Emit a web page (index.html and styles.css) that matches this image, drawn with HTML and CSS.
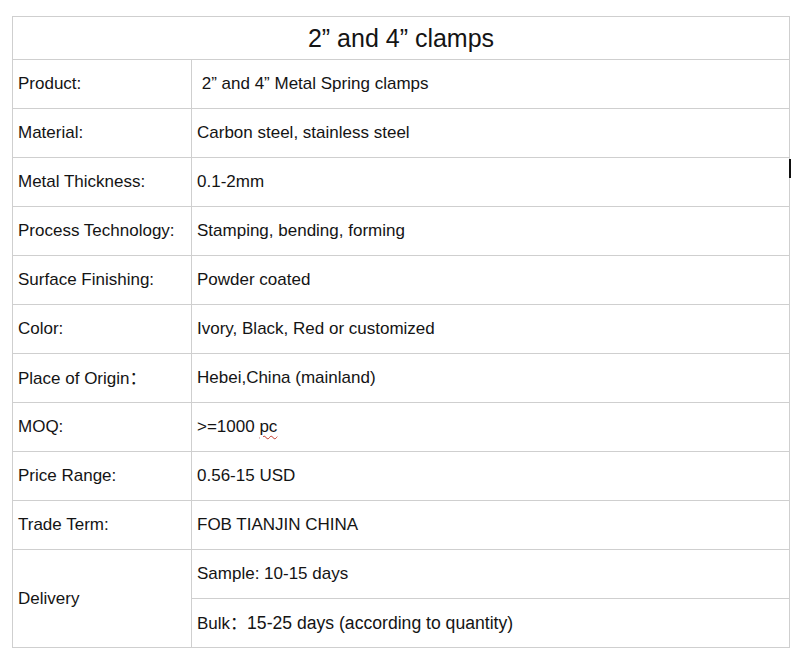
FILE: index.html
```html
<!DOCTYPE html>
<html lang="en">
<head>
<meta charset="utf-8">
<title>2” and 4” clamps</title>
<link rel="stylesheet" href="styles.css">
</head>
<body>
<div class="page">
  <table class="spec">
    <colgroup>
      <col class="col-label">
      <col class="col-value">
    </colgroup>
    <tr><td class="title" colspan="2">2” and 4” clamps</td></tr>
    <tr><td class="label">Product:</td><td class="value">&nbsp;2” and 4” Metal Spring clamps</td></tr>
    <tr><td class="label">Material:</td><td class="value">Carbon steel, stainless steel</td></tr>
    <tr><td class="label">Metal Thickness:</td><td class="value">0.1-2mm</td></tr>
    <tr><td class="label">Process Technology:</td><td class="value">Stamping, bending, forming</td></tr>
    <tr><td class="label">Surface Finishing:</td><td class="value">Powder coated</td></tr>
    <tr><td class="label">Color:</td><td class="value">Ivory, Black, Red or customized</td></tr>
    <tr><td class="label">Place of Origin<span class="cjk">：</span></td><td class="value">Hebei,China (mainland)</td></tr>
    <tr><td class="label">MOQ:</td><td class="value">&gt;=1000 <span class="spell">pc</span></td></tr>
    <tr><td class="label">Price Range:</td><td class="value">0.56-15 USD</td></tr>
    <tr><td class="label">Trade Term:</td><td class="value">FOB TIANJIN CHINA</td></tr>
    <tr><td class="label" rowspan="2">Delivery</td><td class="value">Sample: 10-15 days</td></tr>
    <tr><td class="value">Bulk<span class="cjk">：</span><span class="wide">15-25 days (according to quantity)</span></td></tr>
  </table>
  <span class="caret"></span>
</div>
</body>
</html>
```
FILE: styles.css
```css
html, body {
  margin: 0;
  padding: 0;
  background: #ffffff;
}

.page {
  position: relative;
  padding: 16px 12px 0 12px;
  font-family: "Liberation Sans", Arial, "Noto Sans CJK SC", sans-serif;
  color: #141414;
}

.spec {
  width: 777px;
  border-collapse: collapse;
  table-layout: fixed;
}

.col-label {
  width: 179px;
}

.col-value {
  width: 598px;
}

.spec td {
  border: 1px solid #cfcfcf;
  height: 48px;
  padding: 0 0 0 5px;
  font-size: 17px;
  line-height: 20px;
  vertical-align: middle;
  white-space: nowrap;
  overflow: hidden;
}

.spec td.title {
  height: 42px;
  text-align: center;
  font-size: 25px;
  line-height: 28px;
  padding: 0;
}

.spec td.value {
  padding-left: 5px;
}

.cjk {
  font-family: "Noto Sans CJK SC", sans-serif;
  font-size: 17px;
  line-height: 20px;
}

.wide {
  font-size: 17.6px;
}

.spell {
  text-decoration: underline wavy #c0392b;
  text-decoration-thickness: 1px;
  text-underline-offset: 3px;
}

.caret {
  position: absolute;
  left: 789px;
  top: 159px;
  width: 2px;
  height: 19px;
  background: #111;
}
```
